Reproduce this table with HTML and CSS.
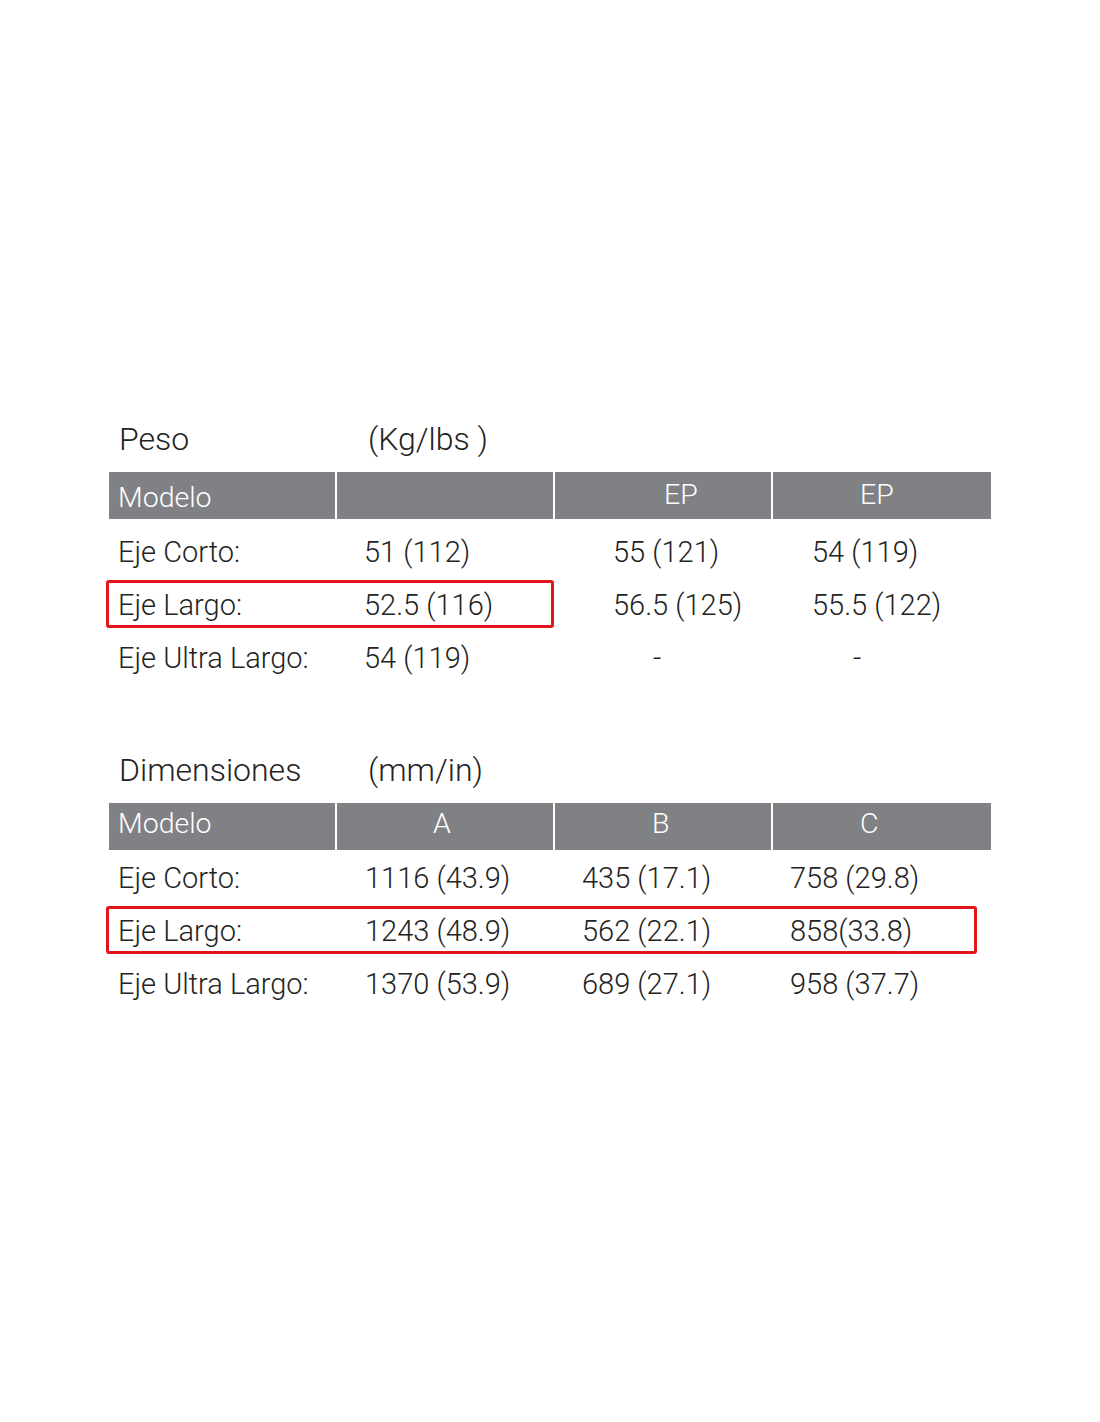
FILE: index.html
```html
<!DOCTYPE html>
<html lang="es">
<head>
<meta charset="utf-8">
<title>Peso y Dimensiones</title>
<link rel="stylesheet" href="styles.css">
</head>
<body>
<main class="page">
  <section class="spec spec-peso">
    <div class="grid title-row">
      <div class="title">Peso</div>
      <div class="unit">(Kg/lbs )</div>
    </div>
    <div class="grid head">
      <div class="hcell h-model">Modelo</div>
      <div class="hcell"></div>
      <div class="hcell h-ep1">EP</div>
      <div class="hcell h-ep2">EP</div>
    </div>
    <div class="rows">
      <div class="grid row">
        <div class="label">Eje Corto:</div>
        <div class="val pc2">51 (112)</div>
        <div class="val pc3">55 (121)</div>
        <div class="val pc4">54 (119)</div>
      </div>
      <div class="grid row highlighted">
        <span class="mark mark-peso"></span>
        <div class="label">Eje Largo:</div>
        <div class="val pc2">52.5 (116)</div>
        <div class="val pc3">56.5 (125)</div>
        <div class="val pc4">55.5 (122)</div>
      </div>
      <div class="grid row">
        <div class="label">Eje Ultra Largo:</div>
        <div class="val pc2">54 (119)</div>
        <div class="val dash3">-</div>
        <div class="val dash4">-</div>
      </div>
    </div>
  </section>

  <section class="spec spec-dim">
    <div class="grid title-row">
      <div class="title">Dimensiones</div>
      <div class="unit">(mm/in)</div>
    </div>
    <div class="grid head">
      <div class="hcell h-model">Modelo</div>
      <div class="hcell h-a">A</div>
      <div class="hcell h-b">B</div>
      <div class="hcell h-c">C</div>
    </div>
    <div class="rows">
      <div class="grid row">
        <div class="label">Eje Corto:</div>
        <div class="val dc2">1116 (43.9)</div>
        <div class="val dc3">435 (17.1)</div>
        <div class="val dc4">758 (29.8)</div>
      </div>
      <div class="grid row highlighted">
        <span class="mark mark-dim"></span>
        <div class="label">Eje Largo:</div>
        <div class="val dc2">1243 (48.9)</div>
        <div class="val dc3">562 (22.1)</div>
        <div class="val dc4">858(33.8)</div>
      </div>
      <div class="grid row">
        <div class="label">Eje Ultra Largo:</div>
        <div class="val dc2">1370 (53.9)</div>
        <div class="val dc3">689 (27.1)</div>
        <div class="val dc4">958 (37.7)</div>
      </div>
    </div>
  </section>
</main>
</body>
</html>
```

FILE: styles.css
```css
html, body {
  margin: 0;
  padding: 0;
  background: #ffffff;
}

body {
  font-family: Roboto, "Liberation Sans", Arial, sans-serif;
  font-weight: 300;
  font-size: 28px;
  color: #232323;
}

.page {
  width: 1100px;
  height: 1422px;
  padding: 419px 0 0 109px;
  box-sizing: border-box;
}

.grid {
  display: grid;
  grid-template-columns: 226px 216px 216px 218px;
  column-gap: 2px;
}

.spec-dim {
  margin-top: 65px;
}

/* titles */
.title-row {
  height: 40px;
  line-height: 40px;
  font-size: 32px;
  white-space: nowrap;
}
.title {
  padding-left: 10px;
}
.unit {
  padding-left: 31px;
}
.spec-peso .head {
  margin-top: 13px;
}
.spec-dim .head {
  margin-top: 13px;
}

/* header bar */
.hcell {
  background: #808184;
  color: #ffffff;
  height: 47px;
  box-sizing: border-box;
  line-height: 33px;
  font-size: 28.5px;
  white-space: nowrap;
}
.spec-peso .hcell {
  padding-top: 9px;
}
.spec-peso .h-ep1,
.spec-peso .h-ep2 {
  padding-top: 6px;
}
.spec-dim .hcell {
  padding-top: 4px;
}
.h-model { padding-left: 9px; }
.h-ep1 { padding-left: 109px; }
.h-ep2 { padding-left: 87px; }
.h-a { padding-left: 96px; }
.h-b { padding-left: 97px; }
.h-c { padding-left: 87px; }

/* body rows */
.spec-peso .rows {
  padding-top: 7px;
}
.spec-dim .rows {
  padding-top: 2px;
}
.row {
  position: relative;
  height: 53px;
  line-height: 53px;
  font-size: 29px;
  white-space: nowrap;
}
.label { padding-left: 9px; }

.pc2 { padding-left: 27px; }
.pc3 { padding-left: 58px; }
.pc4 { padding-left: 39px; }
.dash3 { padding-left: 98px; }
.dash4 { padding-left: 80px; }

.dc2 { padding-left: 28px; }
.dc3 { padding-left: 27px; }
.dc4 { padding-left: 17px; }

/* red annotation boxes */
.mark {
  position: absolute;
  left: -3px;
  border: 3px solid #e3141b;
  border-radius: 3px;
  box-sizing: border-box;
  height: 48px;
  pointer-events: none;
}
.mark-peso {
  top: 1px;
  width: 448px;
}
.mark-dim {
  top: 1px;
  width: 871px;
}
```
